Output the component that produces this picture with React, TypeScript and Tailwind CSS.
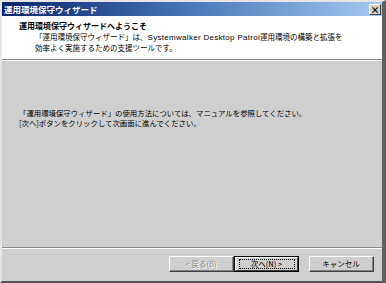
const FONT = '"Noto Sans CJK JP", "Liberation Sans", sans-serif'

function WinButton({
  label,
  isDefault,
  disabled,
}: {
  label: string
  isDefault?: boolean
  disabled?: boolean
}) {
  if (isDefault) {
    return (
      <div className="h-[16px] w-[65px] border border-black bg-[#cfcfcf]">
        <div className="flex h-full w-full items-center justify-center border border-b-[#404040] border-l-white border-r-[#404040] border-t-white">
          <div className="flex h-[10px] w-[56px] items-center justify-center border border-dotted border-black text-[7.5px] leading-none text-black">
            {label}
          </div>
        </div>
      </div>
    )
  }
  return (
    <div className="h-[16px] w-[65px] border border-b-[#404040] border-l-white border-r-[#404040] border-t-white bg-[#cfcfcf]">
      <div
        className={
          disabled
            ? 'flex h-full w-full items-center justify-center border-b border-r border-[#808080] text-[7.5px] leading-none text-[#8a8a8a] [text-shadow:1px_1px_0_#ffffff]'
            : 'flex h-full w-full items-center justify-center border-b border-r border-[#808080] text-[7.5px] leading-none text-black'
        }
      >
        {label}
      </div>
    </div>
  )
}

export default function App() {
  return (
    <div
      className="flex h-[283px] w-[386px] flex-col border-b-2 border-l-2 border-r-4 border-t-2 border-b-[#555555] border-l-[#e6e6e6] border-r-[#606060] border-t-[#e6e6e6] bg-[#cfcfcf]"
      style={{ fontFamily: FONT }}
    >
      {/* title bar */}
      <div className="flex h-[14px] shrink-0 items-center justify-between bg-gradient-to-r from-[#0a246a] via-[#4a78b8] to-[#a6caf0] pl-[2px] pr-[1px]">
        <span className="text-[8.5px] font-bold leading-none text-white">
          運用環境保守ウィザード
        </span>
        <div className="flex h-[11px] w-[12px] items-center justify-center border border-b-[#404040] border-l-white border-r-[#404040] border-t-white bg-[#d4d0c8] text-[9px] font-bold leading-none text-black">
          ×
        </div>
      </div>

      {/* header */}
      <div className="flex h-[43px] shrink-0 flex-col bg-white pl-[17px] pt-[5px]">
        <div className="text-[8px] font-bold leading-[10px] text-black">
          運用環境保守ウィザードへようこそ
        </div>
        <div className="pl-[16px] pt-[1px] text-[7.5px] leading-[10px] text-black">
          <div>
            「運用環境保守ウィザード」は、
            <span className="font-['Liberation_Sans'] text-[8px] tracking-[0.3px]">
              Systemwalker Desktop Patrol
            </span>
            運用環境の構築と拡張を
          </div>
          <div>効率よく実施するための支援ツールです。</div>
        </div>
      </div>
      <div className="h-px shrink-0 bg-[#8a8a8a]" />
      <div className="h-px shrink-0 bg-white" />

      {/* body */}
      <div className="flex-1 pl-[17px] pt-[47px] text-[7.4px] leading-[10px] text-black">
        <div>「運用環境保守ウィザード」の使用方法については、マニュアルを参照してください。</div>
        <div>[次へ]ボタンをクリックして次画面に進んでください。</div>
      </div>

      <div className="h-px shrink-0 bg-[#8a8a8a]" />
      <div className="h-px shrink-0 bg-white" />

      {/* buttons */}
      <div className="flex h-[32px] shrink-0 items-start justify-end pr-[8px] pt-[7px]">
        <WinButton label="< 戻る(B)" disabled />
        <WinButton label="次へ(N) >" isDefault />
        <div className="w-[10px]" />
        <WinButton label="キャンセル" />
      </div>
    </div>
  )
}
